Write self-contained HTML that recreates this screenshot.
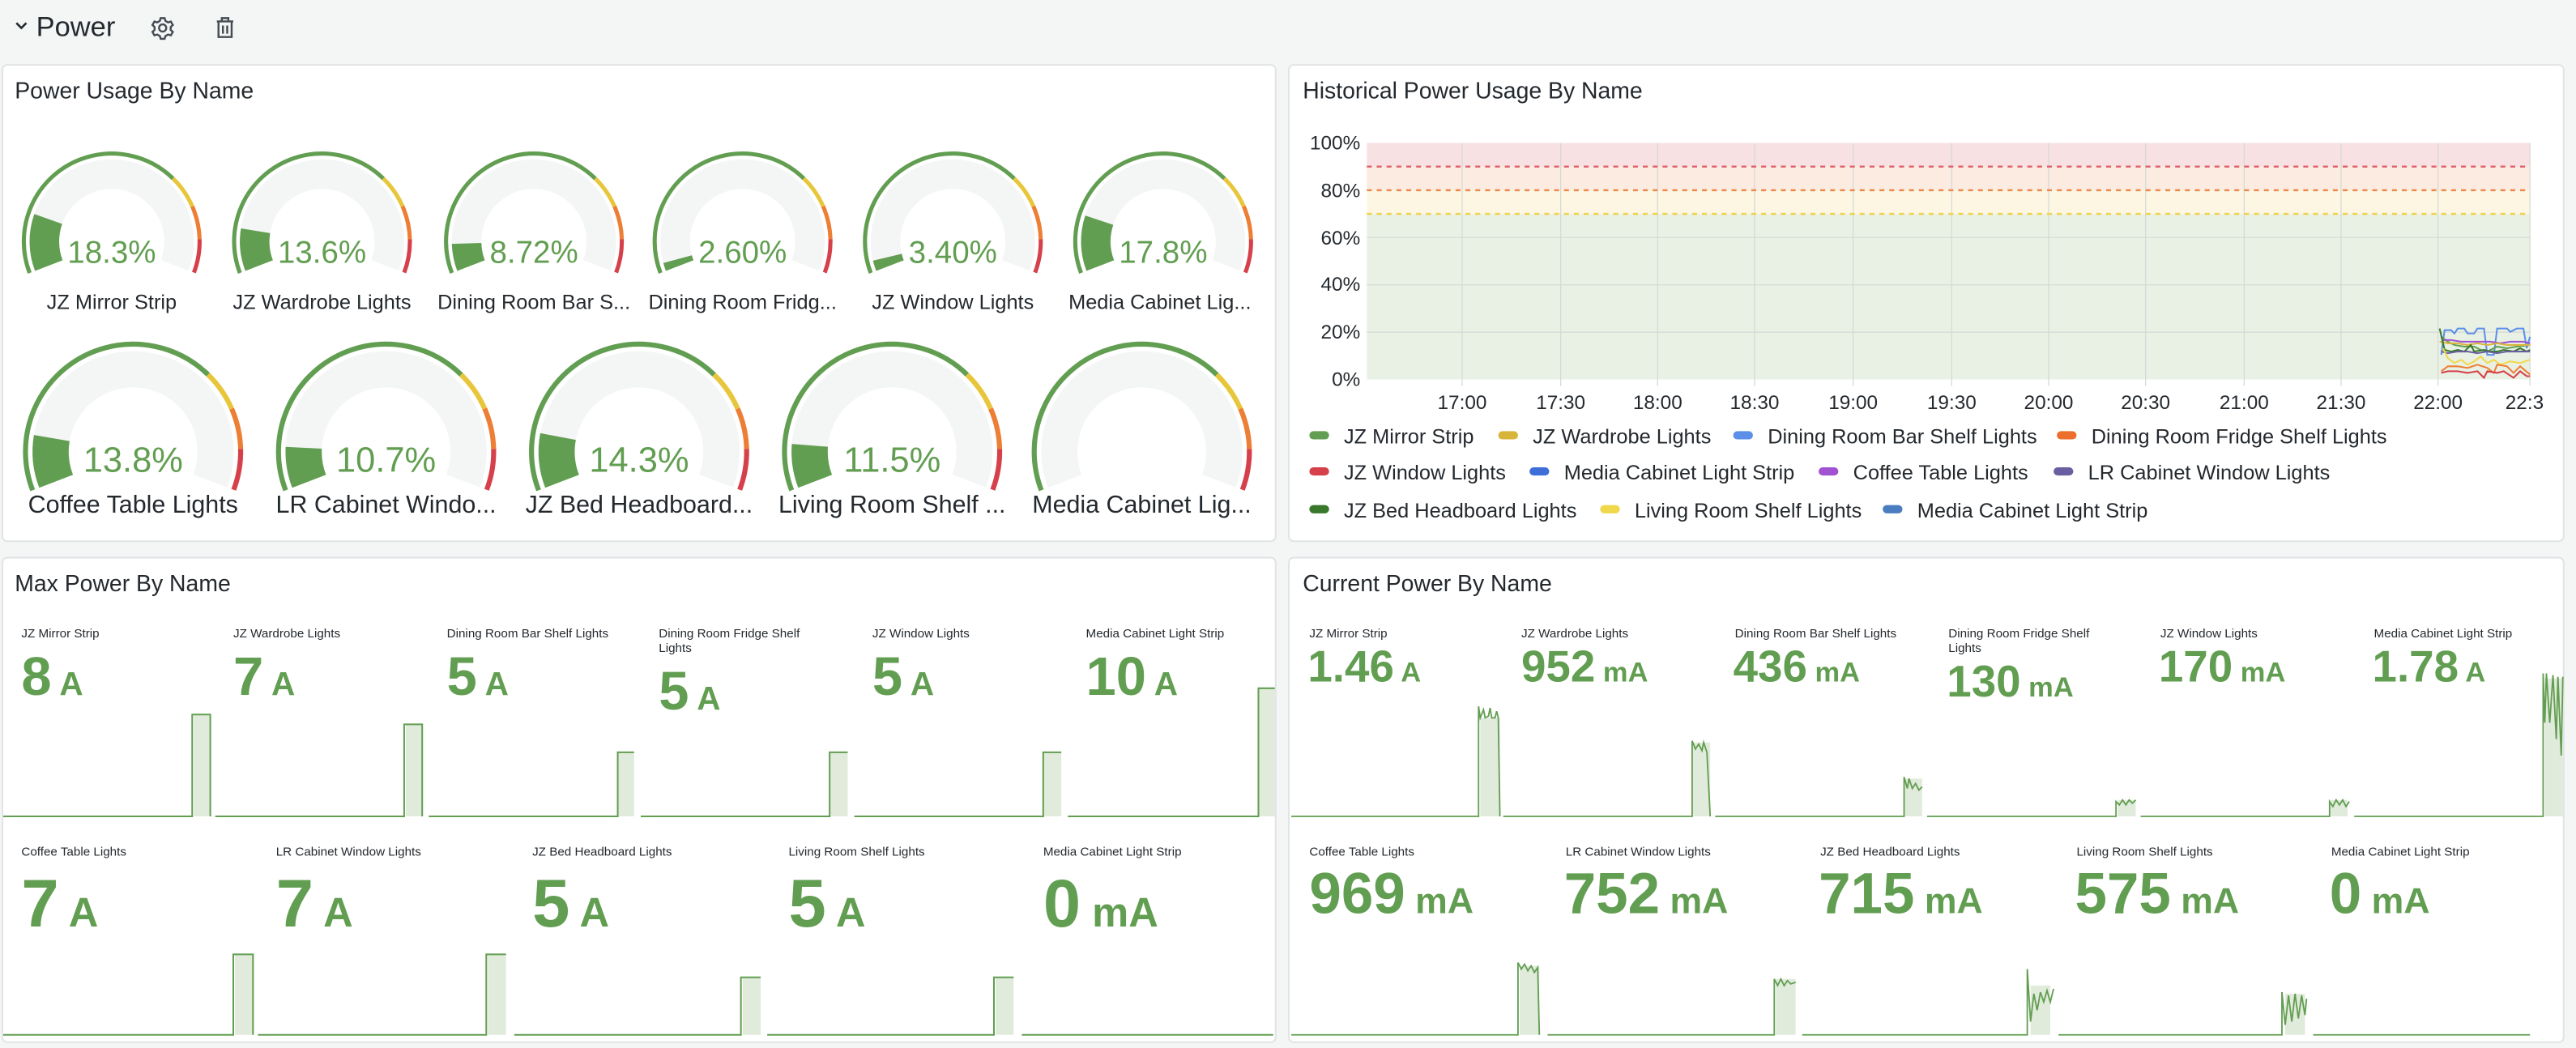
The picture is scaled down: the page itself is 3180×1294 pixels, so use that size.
<!DOCTYPE html>
<html><head><meta charset="utf-8">
<style>
html,body{margin:0;padding:0;background:#f4f5f5;width:3180px;height:1294px;overflow:hidden}
svg{display:block}
text{font-family:"Liberation Sans",sans-serif}
.t{font-size:14px;fill:#24292e;font-weight:500}
.lbl{font-size:12.5px;fill:#24292e}
.sl{font-size:7.5px;fill:#24292e}
.v{fill:#629e51;font-weight:bold}
.ax{font-size:12px;fill:#24292e}
</style></head>
<body>
<svg width="3180" height="1294" viewBox="0 0 1568 638" xmlns="http://www.w3.org/2000/svg">
<rect x="0" y="0" width="1568" height="638" fill="#f4f5f5"/>
<path d="M10 14 l3 3 l3 -3" fill="none" stroke="#24292e" stroke-width="1.3"/>
<text x="22" y="22" style="font-size:17px;fill:#24292e;font-weight:500">Power</text>
<g transform="translate(99,17)" fill="none" stroke="#464c54" stroke-width="1.2">
<circle r="2.2"/>
<path d="M-1.2 -6 h2.4 l.5 1.7 l1.6 .9 l1.7 -.5 l1.2 2.1 l-1.3 1.2 v1.8 l1.3 1.2 l-1.2 2.1 l-1.7 -.5 l-1.6 .9 l-.5 1.7 h-2.4 l-.5 -1.7 l-1.6 -.9 l-1.7 .5 l-1.2 -2.1 l1.3 -1.2 v-1.8 l-1.3 -1.2 l1.2 -2.1 l1.7 .5 l1.6 -.9 z"/>
</g>
<g transform="translate(137,17)" fill="none" stroke="#464c54" stroke-width="1.2">
<path d="M-5 -4 h10 M-2 -4 v-2 h4 v2 M-4 -4 v9.5 h8 v-9.5 M-1.3 -1.5 v5 M1.3 -1.5 v5"/>
</g>

<rect x="1.5" y="39.5" width="775" height="290" rx="3" fill="#fff" stroke="#e1e3e6"/>
<rect x="784.5" y="39.5" width="776" height="290" rx="3" fill="#fff" stroke="#e1e3e6"/>
<rect x="1.5" y="339.5" width="775" height="295" rx="3" fill="#fff" stroke="#e1e3e6"/>
<rect x="784.5" y="339.5" width="776" height="295" rx="3" fill="#fff" stroke="#e1e3e6"/>
<text class="t" x="9" y="60">Power Usage By Name</text>
<text class="t" x="793" y="60">Historical Power Usage By Name</text>
<text class="t" x="9" y="360">Max Power By Name</text>
<text class="t" x="793" y="360">Current Power By Name</text>

<defs>
<g id="gbase">
<circle r="53.5" pathLength="360" fill="none" stroke="#629e51" stroke-width="2.5" stroke-dasharray="155.4 400" transform="rotate(159)"/>
<circle r="53.5" pathLength="360" fill="none" stroke="#e8c63c" stroke-width="2.5" stroke-dasharray="22.2 400" stroke-dashoffset="-155.4" transform="rotate(159)"/>
<circle r="53.5" pathLength="360" fill="none" stroke="#ec7f35" stroke-width="2.5" stroke-dasharray="22.2 400" stroke-dashoffset="-177.6" transform="rotate(159)"/>
<circle r="53.5" pathLength="360" fill="none" stroke="#d5404b" stroke-width="2.5" stroke-dasharray="22.2 400" stroke-dashoffset="-199.8" transform="rotate(159)"/>
<circle r="41" pathLength="360" fill="none" stroke="#f4f5f5" stroke-width="18" stroke-dasharray="222 400" transform="rotate(159)"/>
</g>
<clipPath id="chartclip"><rect x="785" y="40" width="768" height="290"/></clipPath>
</defs>

<g transform="translate(68,147)"><use href="#gbase"/><circle r="41" pathLength="360" fill="none" stroke="#629e51" stroke-width="18" stroke-dasharray="40.6 400" transform="rotate(159)"/><text class="v" x="0" y="13" text-anchor="middle" style="font-size:19px;font-weight:normal">18.3%</text></g>
<g transform="translate(196,147)"><use href="#gbase"/><circle r="41" pathLength="360" fill="none" stroke="#629e51" stroke-width="18" stroke-dasharray="30.2 400" transform="rotate(159)"/><text class="v" x="0" y="13" text-anchor="middle" style="font-size:19px;font-weight:normal">13.6%</text></g>
<g transform="translate(325,147)"><use href="#gbase"/><circle r="41" pathLength="360" fill="none" stroke="#629e51" stroke-width="18" stroke-dasharray="19.4 400" transform="rotate(159)"/><text class="v" x="0" y="13" text-anchor="middle" style="font-size:19px;font-weight:normal">8.72%</text></g>
<g transform="translate(452,147)"><use href="#gbase"/><circle r="41" pathLength="360" fill="none" stroke="#629e51" stroke-width="18" stroke-dasharray="5.8 400" transform="rotate(159)"/><text class="v" x="0" y="13" text-anchor="middle" style="font-size:19px;font-weight:normal">2.60%</text></g>
<g transform="translate(580,147)"><use href="#gbase"/><circle r="41" pathLength="360" fill="none" stroke="#629e51" stroke-width="18" stroke-dasharray="7.5 400" transform="rotate(159)"/><text class="v" x="0" y="13" text-anchor="middle" style="font-size:19px;font-weight:normal">3.40%</text></g>
<g transform="translate(708,147)"><use href="#gbase"/><circle r="41" pathLength="360" fill="none" stroke="#629e51" stroke-width="18" stroke-dasharray="39.5 400" transform="rotate(159)"/><text class="v" x="0" y="13" text-anchor="middle" style="font-size:19px;font-weight:normal">17.8%</text></g>
<g class="lbl" text-anchor="middle">
<text x="68" y="188">JZ Mirror Strip</text>
<text x="196" y="188">JZ Wardrobe Lights</text>
<text x="325" y="188">Dining Room Bar S...</text>
<text x="452" y="188">Dining Room Fridg...</text>
<text x="580" y="188">JZ Window Lights</text>
<text x="706" y="188">Media Cabinet Lig...</text>
</g>
<g transform="translate(81,275) scale(1.224)"><use href="#gbase"/><circle r="41" pathLength="360" fill="none" stroke="#629e51" stroke-width="18" stroke-dasharray="30.6 400" transform="rotate(159)"/><text class="v" x="0" y="10" text-anchor="middle" style="font-size:17.5px;font-weight:normal">13.8%</text></g>
<g transform="translate(235,275) scale(1.224)"><use href="#gbase"/><circle r="41" pathLength="360" fill="none" stroke="#629e51" stroke-width="18" stroke-dasharray="23.8 400" transform="rotate(159)"/><text class="v" x="0" y="10" text-anchor="middle" style="font-size:17.5px;font-weight:normal">10.7%</text></g>
<g transform="translate(389,275) scale(1.224)"><use href="#gbase"/><circle r="41" pathLength="360" fill="none" stroke="#629e51" stroke-width="18" stroke-dasharray="31.7 400" transform="rotate(159)"/><text class="v" x="0" y="10" text-anchor="middle" style="font-size:17.5px;font-weight:normal">14.3%</text></g>
<g transform="translate(543,275) scale(1.224)"><use href="#gbase"/><circle r="41" pathLength="360" fill="none" stroke="#629e51" stroke-width="18" stroke-dasharray="25.5 400" transform="rotate(159)"/><text class="v" x="0" y="10" text-anchor="middle" style="font-size:17.5px;font-weight:normal">11.5%</text></g>
<g transform="translate(695,275) scale(1.224)"><use href="#gbase"/></g>
<g text-anchor="middle" style="font-size:15px;fill:#24292e">
<text x="81" y="312">Coffee Table Lights</text>
<text x="235" y="312">LR Cabinet Windo...</text>
<text x="389" y="312">JZ Bed Headboard...</text>
<text x="543" y="312">Living Room Shelf ...</text>
<text x="695" y="312">Media Cabinet Lig...</text>
</g>

<rect x="832" y="87" width="708" height="14.4" fill="#f7e1e3"/>
<rect x="832" y="101.4" width="708" height="14.4" fill="#fbebe0"/>
<rect x="832" y="115.8" width="708" height="14.4" fill="#fcf6e3"/>
<rect x="832" y="130.2" width="708" height="100.8" fill="#e9f1e5"/>
<g stroke="#d5d8d5" stroke-width="0.6">
<line x1="832" y1="144.6" x2="1540" y2="144.6"/><line x1="832" y1="173.4" x2="1540" y2="173.4"/><line x1="832" y1="202.2" x2="1540" y2="202.2"/>
<line x1="890" y1="87" x2="890" y2="235"/><line x1="950" y1="87" x2="950" y2="235"/><line x1="1009" y1="87" x2="1009" y2="235"/><line x1="1068" y1="87" x2="1068" y2="235"/><line x1="1128" y1="87" x2="1128" y2="235"/><line x1="1188" y1="87" x2="1188" y2="235"/><line x1="1247" y1="87" x2="1247" y2="235"/><line x1="1306" y1="87" x2="1306" y2="235"/><line x1="1366" y1="87" x2="1366" y2="235"/><line x1="1425" y1="87" x2="1425" y2="235"/><line x1="1484" y1="87" x2="1484" y2="235"/><line x1="1540" y1="87" x2="1540" y2="235"/>
</g>
<line x1="832" y1="101.4" x2="1540" y2="101.4" stroke="#e0606a" stroke-width="1.2" stroke-dasharray="3 3"/>
<line x1="832" y1="115.8" x2="1540" y2="115.8" stroke="#ec8a4c" stroke-width="1.2" stroke-dasharray="3 3"/>
<line x1="832" y1="130.2" x2="1540" y2="130.2" stroke="#eed24a" stroke-width="1.2" stroke-dasharray="3 3"/>
<g class="ax" text-anchor="end">
<text x="828" y="91">100%</text><text x="828" y="120">80%</text><text x="828" y="149">60%</text><text x="828" y="177">40%</text><text x="828" y="206">20%</text><text x="828" y="235">0%</text>
</g>
<g class="ax" text-anchor="middle" clip-path="url(#chartclip)">
<text x="890" y="249">17:00</text><text x="950" y="249">17:30</text><text x="1009" y="249">18:00</text><text x="1068" y="249">18:30</text><text x="1128" y="249">19:00</text><text x="1188" y="249">19:30</text><text x="1247" y="249">20:00</text><text x="1306" y="249">20:30</text><text x="1366" y="249">21:00</text><text x="1425" y="249">21:30</text><text x="1484" y="249">22:00</text><text x="1525" y="249" text-anchor="start">22:3</text>
</g>
<g fill="none" stroke-width="1">
<polyline stroke="#5b8fe8" points="1486,216 1488,201 1492,201 1494,203 1496,200 1500,200 1502,203 1506,203 1508,200 1512,200 1514,216 1518,216 1520,200 1526,200 1528,202 1532,200 1536,200 1538,212 1540,205"/>
<polyline stroke="#629e51" points="1486,205 1490,208 1494,210 1500,211 1506,211 1510,213 1514,214 1520,211 1526,212 1532,211 1540,210"/>
<polyline stroke="#a052d0" points="1487,207 1492,207 1498,208 1504,208 1510,208 1516,208 1522,209 1528,208 1536,208 1540,209"/>
<polyline stroke="#d8b53a" points="1485,208 1490,209 1496,209 1502,210 1508,209 1514,210 1520,209 1526,210 1534,210 1540,210"/>
<polyline stroke="#37782a" points="1485,200 1488,213 1492,214 1496,213 1500,214 1504,210 1506,214 1512,213 1516,214 1520,214 1524,213 1530,214 1534,212 1538,214 1540,213"/>
<polyline stroke="#6b5ea0" points="1486,214 1490,215 1496,214 1502,214 1508,215 1514,214 1520,215 1526,214 1534,214 1540,214"/>
<polyline stroke="#f0d84c" points="1487,212 1490,218 1494,221 1498,219 1502,222 1506,220 1510,217 1514,221 1518,219 1522,222 1528,220 1534,221 1540,219"/>
<polyline stroke="#ec7f35" points="1486,226 1490,223 1496,223 1502,224 1508,222 1514,224 1518,227 1520,222 1526,223 1530,227 1534,223 1540,228"/>
<polyline stroke="#d5404b" points="1486,227 1490,226 1496,226 1502,227 1508,226 1512,230 1514,226 1520,227 1524,226 1530,230 1534,226 1538,229 1540,229"/>
</g>
<g style="font-size:12.5px;fill:#24292e">
<rect x="797" y="262.5" width="12" height="5" rx="2.5" fill="#629e51"/><text x="818" y="270">JZ Mirror Strip</text>
<rect x="912" y="262.5" width="12" height="5" rx="2.5" fill="#d8b53a"/><text x="933" y="270">JZ Wardrobe Lights</text>
<rect x="1055" y="262.5" width="12" height="5" rx="2.5" fill="#5b8fe8"/><text x="1076" y="270">Dining Room Bar Shelf Lights</text>
<rect x="1252" y="262.5" width="12" height="5" rx="2.5" fill="#ec6f2d"/><text x="1273" y="270">Dining Room Fridge Shelf Lights</text>
<rect x="797" y="284.5" width="12" height="5" rx="2.5" fill="#d5404b"/><text x="818" y="292">JZ Window Lights</text>
<rect x="931" y="284.5" width="12" height="5" rx="2.5" fill="#3e6fd8"/><text x="952" y="292">Media Cabinet Light Strip</text>
<rect x="1107" y="284.5" width="12" height="5" rx="2.5" fill="#a052d0"/><text x="1128" y="292">Coffee Table Lights</text>
<rect x="1250" y="284.5" width="12" height="5" rx="2.5" fill="#6b5ea0"/><text x="1271" y="292">LR Cabinet Window Lights</text>
<rect x="797" y="307.5" width="12" height="5" rx="2.5" fill="#37782a"/><text x="818" y="315">JZ Bed Headboard Lights</text>
<rect x="974" y="307.5" width="12" height="5" rx="2.5" fill="#f0d84c"/><text x="995" y="315">Living Room Shelf Lights</text>
<rect x="1146" y="307.5" width="12" height="5" rx="2.5" fill="#4a7dc0"/><text x="1167" y="315">Media Cabinet Light Strip</text>
</g>

<g class="sl">
<text x="13" y="388">JZ Mirror Strip</text><text x="142" y="388">JZ Wardrobe Lights</text><text x="272" y="388">Dining Room Bar Shelf Lights</text><text x="401" y="388">Dining Room Fridge Shelf</text><text x="401" y="397">Lights</text><text x="531" y="388">JZ Window Lights</text><text x="661" y="388">Media Cabinet Light Strip</text>
<text x="13" y="521">Coffee Table Lights</text><text x="168" y="521">LR Cabinet Window Lights</text><text x="324" y="521">JZ Bed Headboard Lights</text><text x="480" y="521">Living Room Shelf Lights</text><text x="635" y="521">Media Cabinet Light Strip</text>
</g>
<g class="v">
<text x="13" y="423" style="font-size:33px">8<tspan style="font-size:20px"> A</tspan></text>
<text x="142" y="423" style="font-size:33px">7<tspan style="font-size:20px"> A</tspan></text>
<text x="272" y="423" style="font-size:33px">5<tspan style="font-size:20px"> A</tspan></text>
<text x="401" y="432" style="font-size:33px">5<tspan style="font-size:20px"> A</tspan></text>
<text x="531" y="423" style="font-size:33px">5<tspan style="font-size:20px"> A</tspan></text>
<text x="661" y="423" style="font-size:33px">10<tspan style="font-size:20px"> A</tspan></text>
<text x="13" y="564" style="font-size:41px">7<tspan style="font-size:25px"> A</tspan></text>
<text x="168" y="564" style="font-size:41px">7<tspan style="font-size:25px"> A</tspan></text>
<text x="324" y="564" style="font-size:41px">5<tspan style="font-size:25px"> A</tspan></text>
<text x="480" y="564" style="font-size:41px">5<tspan style="font-size:25px"> A</tspan></text>
<text x="635" y="564" style="font-size:41px">0<tspan style="font-size:25px"> mA</tspan></text>
</g>
<g fill="#e1ebdc"><rect x="118" y="435" width="10" height="62"/><rect x="247" y="441" width="10" height="56"/><rect x="376" y="458" width="10" height="39"/><rect x="505" y="458" width="11" height="39"/><rect x="635" y="458" width="11" height="39"/><rect x="766" y="419" width="10" height="78"/>
<rect x="143" y="581" width="11" height="49"/><rect x="297" y="581" width="11" height="49"/><rect x="452" y="595" width="11" height="35"/><rect x="606" y="595" width="11" height="35"/></g>
<g fill="none" stroke="#629e51" stroke-width="1">
<polyline points="2,497 117,497 117,435 128,435 128,497"/><polyline points="131,497 246,497 246,441 257,441 257,497"/><polyline points="261,497 376,497 376,458 386,458"/><polyline points="390,497 505,497 505,458 516,458"/><polyline points="520,497 635,497 635,458 646,458"/><polyline points="650,497 766,497 766,419 776,419"/>
<polyline points="2,630 142,630 142,581 154,581 154,630"/><polyline points="157,630 296,630 296,581 308,581"/><polyline points="313,630 451,630 451,595 463,595"/><polyline points="467,630 605,630 605,595 617,595"/><polyline points="622,630 775,630"/>
</g>

<g class="sl">
<text x="797" y="388">JZ Mirror Strip</text><text x="926" y="388">JZ Wardrobe Lights</text><text x="1056" y="388">Dining Room Bar Shelf Lights</text><text x="1186" y="388">Dining Room Fridge Shelf</text><text x="1186" y="397">Lights</text><text x="1315" y="388">JZ Window Lights</text><text x="1445" y="388">Media Cabinet Light Strip</text>
<text x="797" y="521">Coffee Table Lights</text><text x="953" y="521">LR Cabinet Window Lights</text><text x="1108" y="521">JZ Bed Headboard Lights</text><text x="1264" y="521">Living Room Shelf Lights</text><text x="1419" y="521">Media Cabinet Light Strip</text>
</g>
<g class="v">
<text x="796" y="415" style="font-size:27px">1.46<tspan style="font-size:17px"> A</tspan></text>
<text x="926" y="415" style="font-size:27px">952<tspan style="font-size:17px"> mA</tspan></text>
<text x="1055" y="415" style="font-size:27px">436<tspan style="font-size:17px"> mA</tspan></text>
<text x="1185" y="424" style="font-size:27px">130<tspan style="font-size:17px"> mA</tspan></text>
<text x="1314" y="415" style="font-size:27px">170<tspan style="font-size:17px"> mA</tspan></text>
<text x="1444" y="415" style="font-size:27px">1.78<tspan style="font-size:17px"> A</tspan></text>
<text x="797" y="556" style="font-size:35px">969<tspan style="font-size:22px"> mA</tspan></text>
<text x="952" y="556" style="font-size:35px">752<tspan style="font-size:22px"> mA</tspan></text>
<text x="1107" y="556" style="font-size:35px">715<tspan style="font-size:22px"> mA</tspan></text>
<text x="1263" y="556" style="font-size:35px">575<tspan style="font-size:22px"> mA</tspan></text>
<text x="1418" y="556" style="font-size:35px">0<tspan style="font-size:22px"> mA</tspan></text>
</g>
<g fill="#e1ebdc"><rect x="901" y="437" width="12" height="60"/><rect x="1030" y="452" width="11" height="45"/><rect x="1159" y="474" width="11" height="23"/><rect x="1289" y="487" width="11" height="10"/><rect x="1418" y="487" width="11" height="10"/><rect x="1549" y="413" width="11" height="84"/>
<rect x="925" y="588" width="12" height="42"/><rect x="1081" y="596" width="12" height="34"/><rect x="1236" y="600" width="12" height="30"/><rect x="1391" y="605" width="12" height="25"/></g>
<g fill="none" stroke="#629e51" stroke-width="0.9">
<polyline points="786,497 900,497 900,430 901,437 903,432 904,437 906,436 907,431 908,437 910,437 911,433 912,437 913,497"/>
<polyline points="915,497 1030,497 1030,451 1032,456 1034,453 1036,457 1037,452 1039,458 1041,497"/>
<polyline points="1044,497 1159,497 1159,473 1161,480 1162,474 1164,480 1166,477 1168,481 1170,479"/>
<polyline points="1173,497 1288,497 1288,488 1290,490 1292,487 1294,490 1296,487 1298,489 1300,487"/>
<polyline points="1303,497 1418,497 1418,488 1420,491 1422,487 1424,490 1426,487 1428,491 1430,488"/>
<polyline points="1433,497 1548,497 1548,410 1549,440 1550,410 1552,440 1554,411 1556,450 1557,412 1559,460 1560,412"/>
<polyline points="786,630 924,630 924,586 926,590 928,587 930,591 932,588 934,592 936,589 937,630"/>
<polyline points="942,630 1080,630 1080,596 1082,600 1084,596 1086,600 1088,597 1090,599 1093,598"/>
<polyline points="1097,630 1234,630 1234,590 1236,622 1238,605 1240,615 1242,604 1244,610 1246,603 1248,610 1250,602"/>
<polyline points="1253,630 1389,630 1389,604 1391,624 1393,606 1395,622 1397,605 1399,620 1401,606 1403,618 1404,608"/>
<polyline points="1408,630 1540,630"/>
</g>
</svg>
</body></html>
